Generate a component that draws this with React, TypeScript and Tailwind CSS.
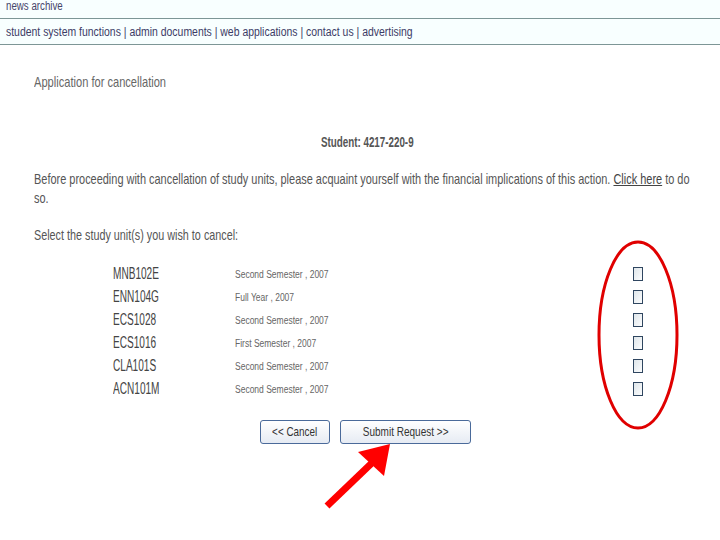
const units = [
  { code: "MNB102E", period: "Second Semester , 2007" },
  { code: "ENN104G", period: "Full Year , 2007" },
  { code: "ECS1028", period: "Second Semester , 2007" },
  { code: "ECS1016", period: "First Semester , 2007" },
  { code: "CLA101S", period: "Second Semester , 2007" },
  { code: "ACN101M", period: "Second Semester , 2007" },
];

// the screenshot is squeezed sideways, so text is narrowed with scale-x
const squeeze = "inline-block whitespace-nowrap origin-left";

export default function App() {
  return (
    <div className="relative w-[720px] h-[540px] overflow-hidden bg-white font-['Liberation_Sans',Arial,sans-serif]">
      <div className="bg-[#f8ffff]">
        <div className="h-[19px] border-b border-[#7d9696] px-[6px] text-[12px] leading-[13px] text-[#45456a]">
          <span className={`${squeeze} scale-x-[0.81]`}>news archive</span>
        </div>
        <div className="h-[26px] border-b border-[#7d9696] px-[6px] flex items-center text-[12px] text-[#3c3c66]">
          <span className={`${squeeze} scale-x-[0.87]`}>
            student system functions | admin documents | web applications | contact us | advertising
          </span>
        </div>
      </div>

      <div className="pl-[34px] text-[#555]">
        <div className="mt-[28px] text-[15px] leading-[18px] text-[#666]">
          <span className={`${squeeze} scale-x-[0.74]`}>Application for cancellation</span>
        </div>
        <div className="mt-[42px] pl-[287px] text-[14px] leading-[18px] font-bold text-[#555]">
          <span className={`${squeeze} scale-x-[0.7]`}>Student: 4217-220-9</span>
        </div>
        <p className="mt-[18px] text-[15px] leading-[19px]">
          <span className={`${squeeze} scale-x-[0.73]`}>
            Before proceeding with cancellation of study units, please acquaint yourself with the financial implications of this action.{" "}
            <span className="underline text-[#444]">Click here</span> to do
          </span>
          <br />
          <span className={`${squeeze} scale-x-[0.73]`}>so.</span>
        </p>
        <div className="mt-[19px] text-[15px] leading-[18px]">
          <span className={`${squeeze} scale-x-[0.72]`}>Select the study unit(s) you wish to cancel:</span>
        </div>
      </div>

      <div className="mt-[18px] pl-[113px]">
        {units.map((u) => (
          <div key={u.code} className="grid grid-cols-[122px_398px_auto] items-center h-[23px]">
            <span className="text-[16px] text-[#444]">
              <span className={`${squeeze} scale-x-[0.63]`}>{u.code}</span>
            </span>
            <span className="text-[10px] text-[#666]">
              <span className={`${squeeze} scale-x-[0.85]`}>{u.period}</span>
            </span>
            <span className="block w-[10px] h-[14px] border border-[#2f4660] bg-gradient-to-br from-[#dfe6ea] to-[#fbfcfd]" />
          </div>
        ))}
      </div>

      <div className="mt-[20px] pl-[260px] flex gap-[10px]">
        <button className="w-[70px] h-[24px] rounded-[3px] border border-[#4a6a9a] bg-gradient-to-b from-white to-[#e6ebf3] text-[13px] text-[#333] flex items-center justify-center">
          <span className="inline-block whitespace-nowrap scale-x-[0.76]">&lt;&lt; Cancel</span>
        </button>
        <button className="w-[131px] h-[24px] rounded-[3px] border border-[#4a6a9a] bg-gradient-to-b from-white to-[#e6ebf3] text-[13px] text-[#333] flex items-center justify-center">
          <span className="inline-block whitespace-nowrap scale-x-[0.77]">Submit Request &gt;&gt;</span>
        </button>
      </div>

      <svg className="absolute left-0 top-0 pointer-events-none" width="720" height="540">
        <ellipse cx="638" cy="335" rx="39" ry="93" fill="none" stroke="#e00000" strokeWidth="3" />
        <line x1="327" y1="506" x2="375" y2="460" stroke="#ff0000" strokeWidth="7" />
        <polygon points="390,444 384,476 358,452" fill="#ff0000" />
      </svg>
    </div>
  );
}
